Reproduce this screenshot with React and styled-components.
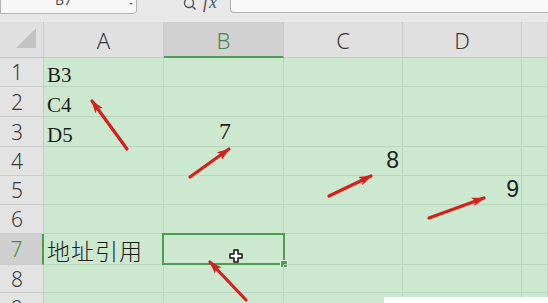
import React from "react";
import styled, { createGlobalStyle } from "styled-components";

const Global = createGlobalStyle`
  html, body { margin: 0; padding: 0; background: #cce8cf; }
  body { width: 548px; height: 303px; overflow: hidden; }
`;

const Page = styled.div`
  position: relative;
  width: 548px;
  height: 303px;
  overflow: hidden;
  background: #cce8cf;
  font-family: "Noto Sans", "Liberation Sans", sans-serif;
`;

const Toolbar = styled.div`
  display: flex;
  align-items: flex-start;
  height: 22px;
  background: #e8e8e8;
`;

const NameBox = styled.div`
  position: relative;
  width: 137px;
  height: 14px;
  box-sizing: border-box;
  background: #f7f7f7;
  border: 1px solid #b3b3b3;
  border-top: none;
  border-radius: 0 0 4px 0;
  display: flex;
  justify-content: center;
  overflow: hidden;
  font-size: 14px;
  line-height: 14px;
  color: #555;
`;

const NameText = styled.span`
  margin-top: -7px;
  margin-right: 10px;
`;

const Caret = styled.span`
  position: absolute;
  right: 3px;
  top: 3px;
  width: 0;
  height: 0;
  border-left: 2px solid transparent;
  border-right: 2px solid transparent;
  border-top: 2px solid #777;
`;

const Tools = styled.div`
  display: flex;
  align-items: flex-start;
  gap: 6px;
  width: 93px;
  padding-left: 46px;
  box-sizing: border-box;
  height: 14px;
  overflow: hidden;
`;

const Fx = styled.span`
  font-family: "Liberation Serif", serif;
  font-style: italic;
  font-size: 18px;
  line-height: 18px;
  margin-top: -7px;
  color: #555;
  letter-spacing: 1px;
`;

const FormulaInput = styled.div`
  flex: 1;
  height: 13px;
  box-sizing: border-box;
  background: #f8f8f8;
  border: 1px solid #b3b3b3;
  border-top: none;
  border-right: none;
  border-radius: 0 0 0 4px;
`;

const Sheet = styled.div`
  display: grid;
  grid-template-columns: 44px 120px 120px 119px 119px 26px;
  grid-template-rows: 36px 29px 30px 30px 29px 29px 29px 31px 28px 30px;
`;

const Corner = styled.div`
  background: #e0e0e0;
  border-right: 1px solid #c9c9c9;
  border-bottom: 1px solid #c2c2c2;
  display: flex;
  justify-content: flex-end;
  align-items: flex-end;
  padding: 0 7px 9px 0;
`;

const Triangle = styled.div`
  width: 20px;
  height: 20px;
  background: #c3c3c3;
  clip-path: polygon(100% 0, 100% 100%, 0 100%);
`;

const ColHead = styled.div`
  background: ${(p) => (p.$active ? "#d1d1d1" : "#e0e0e0")};
  color: ${(p) => (p.$active ? "#3f8d4a" : "#3a3a3a")};
  border-right: 1px solid #cbcbcb;
  border-bottom: ${(p) => (p.$active ? "2px solid #4f9c57" : "1px solid #b9cdbb")};
  display: flex;
  align-items: center;
  justify-content: center;
  font-size: 22px;
  font-weight: 300;
  padding-top: 1px;
  box-sizing: border-box;
`;

const RowHead = styled.div`
  background: ${(p) => (p.$active ? "#cfcfcf" : "#e3e3e3")};
  color: ${(p) => (p.$active ? "#3f8d4a" : "#3a3a3a")};
  border-right: ${(p) => (p.$active ? "2px solid #4f9c57" : "1px solid #c9c9c9")};
  border-bottom: 1px solid #cbcbcb;
  display: flex;
  align-items: center;
  justify-content: center;
  padding-right: 9px;
  font-size: 21px;
  font-weight: 300;
  box-sizing: border-box;
`;

const Cell = styled.div`
  position: relative;
  border-right: 1px solid #b9d5bc;
  border-bottom: 1px solid #b9d5bc;
  display: flex;
  align-items: flex-end;
  justify-content: ${(p) => p.$justify || "flex-start"};
  padding: 0 ${(p) => p.$pr || 0}px 0 ${(p) => p.$pl || 3}px;
  color: #1c1c1c;
  white-space: nowrap;
  box-sizing: border-box;
`;

const SerifText = styled.span`
  font-family: "Liberation Serif", serif;
  font-size: ${(p) => p.$size || 21}px;
  line-height: 1;
  margin-bottom: ${(p) => p.$mb || 0}px;
`;

const SansNum = styled.span`
  font-family: "Liberation Sans", sans-serif;
  font-size: 23px;
  line-height: 1;
  color: #222;
  margin-bottom: 3px;
`;

const CjkText = styled.span`
  font-family: "Noto Sans CJK SC", sans-serif;
  font-size: 23px;
  font-weight: 300;
  line-height: 1;
  letter-spacing: 1px;
  margin-bottom: 2px;
  color: #1a1a1a;
`;

const Selection = styled.div`
  position: absolute;
  left: -2px;
  top: -1px;
  right: -2px;
  bottom: -1px;
  border: 2px solid #4f9c57;
  pointer-events: none;
`;

const Handle = styled.div`
  position: absolute;
  right: -5px;
  bottom: -5px;
  width: 6px;
  height: 6px;
  background: #4f9c57;
  border: 1px solid #e8f4e9;
`;

const Overlay = styled.svg`
  position: absolute;
  left: 0;
  top: 0;
  pointer-events: none;
`;

const WhiteBox = styled.div`
  position: absolute;
  left: 384px;
  top: 297px;
  right: 0;
  bottom: 0;
  background: #ffffff;
`;

const cols = ["A", "B", "C", "D", ""];

const content = {
  "1A": <SerifText>B3</SerifText>,
  "2A": <SerifText>C4</SerifText>,
  "3A": <SerifText>D5</SerifText>,
  "3B": <SerifText $size={24} $mb={3}>7</SerifText>,
  "4C": <SansNum>8</SansNum>,
  "5D": <SansNum>9</SansNum>,
  "7A": <CjkText>地址引用</CjkText>,
};

const cellProps = {
  "3B": { $justify: "center", $pl: 0, $pr: 0 },
  "4C": { $justify: "flex-end", $pr: 3 },
  "5D": { $justify: "flex-end", $pr: 2 },
};

const arrows = [
  [127, 149, 92, 101],
  [190, 177, 229, 149],
  [329, 196, 371, 176],
  [429, 218, 484, 198],
  [246, 300, 210, 262],
];

export default function App() {
  const rows = [1, 2, 3, 4, 5, 6, 7, 8, 9];
  return (
    <Page>
      <Global />
      <Toolbar>
        <NameBox>
          <NameText>B7</NameText>
          <Caret />
        </NameBox>
        <Tools>
          <svg width="14" height="14" viewBox="0 0 14 14" style={{ marginTop: -3 }}>
            <circle cx="6" cy="6" r="4.5" fill="none" stroke="#555" strokeWidth="1.4" />
            <line x1="9.3" y1="9.3" x2="12.5" y2="12.5" stroke="#555" strokeWidth="1.6" />
          </svg>
          <Fx>fx</Fx>
        </Tools>
        <FormulaInput />
      </Toolbar>
      <Sheet>
        <Corner>
          <Triangle />
        </Corner>
        {cols.map((c, i) => (
          <ColHead key={"h" + i} $active={c === "B"}>
            {c}
          </ColHead>
        ))}
        {rows.map((r) => (
          <React.Fragment key={r}>
            <RowHead $active={r === 7}>{r}</RowHead>
            {cols.map((c, i) => {
              const k = r + c;
              return (
                <Cell key={k + i} {...(cellProps[k] || {})}>
                  {content[k]}
                  {k === "7B" && (
                    <Selection>
                      <Handle />
                    </Selection>
                  )}
                </Cell>
              );
            })}
          </React.Fragment>
        ))}
      </Sheet>
      <Overlay width="548" height="303" viewBox="0 0 548 303">
        <defs>
          <marker
            id="head"
            markerUnits="userSpaceOnUse"
            markerWidth="14"
            markerHeight="10"
            refX="12"
            refY="5"
            orient="auto"
          >
            <path d="M0,0.5 L13,5 L0,9.5 L3,5 z" fill="#d6201b" />
          </marker>
        </defs>
        {arrows.map(([x1, y1, x2, y2], i) => (
          <line
            key={i}
            x1={x1}
            y1={y1}
            x2={x2}
            y2={y2}
            stroke="#d6201b"
            strokeWidth="3.2"
            strokeLinecap="round"
            markerEnd="url(#head)"
          />
        ))}
        <path
          d="M234,250 h4 v4 h4 v4 h-4 v4 h-4 v-4 h-4 v-4 h4 z"
          fill="#ffffff"
          stroke="#111"
          strokeWidth="1.5"
          strokeLinejoin="round"
        />
      </Overlay>
      <WhiteBox />
    </Page>
  );
}
